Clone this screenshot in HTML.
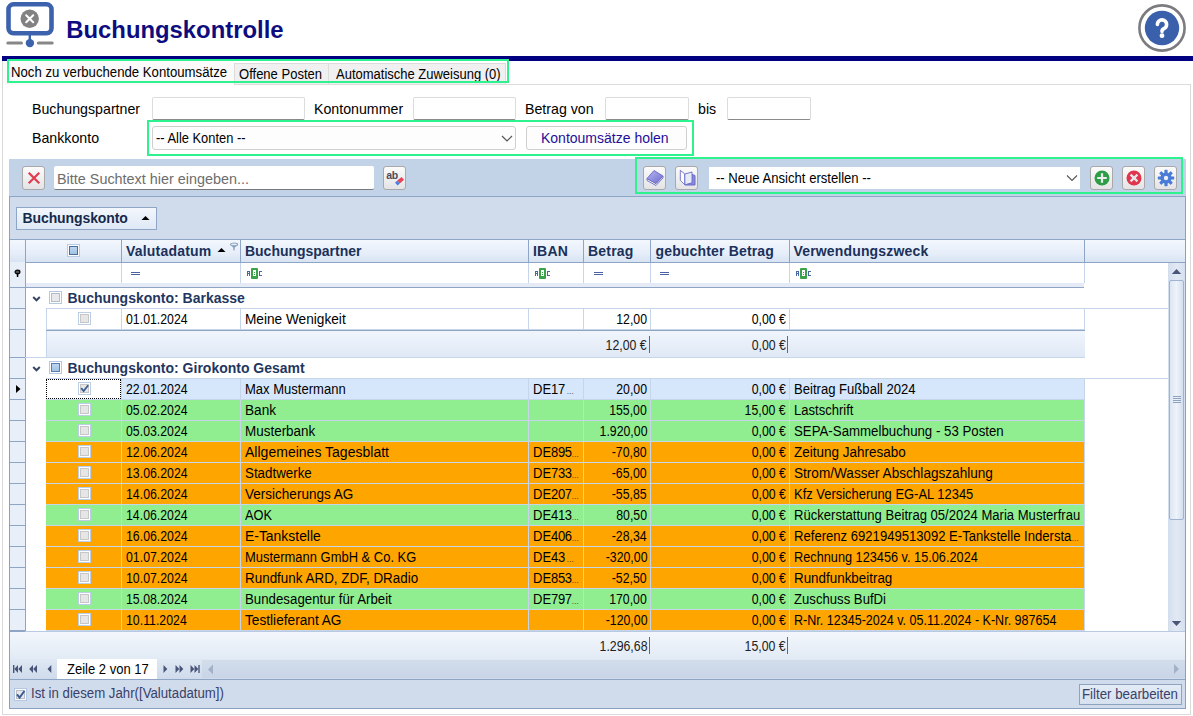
<!DOCTYPE html>
<html><head><meta charset="utf-8">
<style>
*{box-sizing:border-box;margin:0;padding:0}
html,body{width:1193px;height:716px;overflow:hidden;background:#fff;font-family:"Liberation Sans",sans-serif;color:#000}
.a{position:absolute}
.t{position:absolute;white-space:nowrap;line-height:1}
.n{letter-spacing:-0.44px}
.el{font-size:8px;letter-spacing:-0.5px}
.green{position:absolute;border:2px solid #2ef28e}
.inp{position:absolute;background:#fff;border:1px solid #dcdcdc;border-bottom:1px solid #8a8a8a;border-radius:2px}
.btn{position:absolute;border:1px solid #a9a9a9;border-radius:3px;background:linear-gradient(#fbfbfb,#e4e4e6)}
</style></head><body>

<!-- header icon -->
<svg class="a" style="left:0;top:0" width="60" height="56" viewBox="0 0 60 56">
  <rect x="8.5" y="4.3" width="43" height="29" rx="5" fill="none" stroke="#3d62ad" stroke-width="4.6"/>
  <circle cx="29.7" cy="18.8" r="9.2" fill="#828282"/>
  <path d="M26.2 15.3 L33.2 22.3 M33.2 15.3 L26.2 22.3" stroke="#fff" stroke-width="2" stroke-linecap="round"/>
  <rect x="28.6" y="35" width="2.4" height="6" fill="#3d62ad"/>
  <circle cx="29.9" cy="43.1" r="4.2" fill="#3d62ad"/>
  <line x1="7.8" y1="43.1" x2="21.5" y2="43.1" stroke="#878787" stroke-width="3" stroke-linecap="round"/>
  <line x1="38.3" y1="43.1" x2="52.2" y2="43.1" stroke="#878787" stroke-width="3" stroke-linecap="round"/>
</svg>
<div class="t" style="left:66.3px;top:18px;font-size:23.85px;font-weight:bold;color:#0d0d80">Buchungskontrolle</div>

<!-- help icon -->
<svg class="a" style="left:1136px;top:3px" width="52" height="52" viewBox="0 0 52 52">
  <circle cx="26" cy="25" r="22.6" fill="#fff" stroke="#7b7b80" stroke-width="2.6"/>
  <circle cx="26" cy="25" r="17.2" fill="#3a5fab"/>
  <path d="M21.4 21.5 A4.6 4.6 0 1 1 28.3 25.5 Q26 26.5 26 28.2 V28.4" fill="none" stroke="#fff" stroke-width="3.6" stroke-linecap="round"/>
  <circle cx="26" cy="32.7" r="2.4" fill="#fff"/>
</svg>
<!-- blue bar -->
<div class="a" style="left:2px;top:56px;width:1191px;height:5px;background:#000080"></div>

<!-- outer panel -->
<div class="a" style="left:2px;top:61px;width:1px;height:654px;background:#dadada"></div>
<div class="a" style="left:2px;top:84px;width:1189px;height:631px;border:1px solid #dadada;border-top:none;border-left:none"></div>

<!-- tabs -->
<div class="a" style="left:3px;top:61px;width:231px;height:24px;background:#fafafa"></div>
<div class="a" style="left:234px;top:63px;width:95px;height:22px;background:#f0f0f0;border:1px solid #dcdcdc;border-bottom:none"></div>
<div class="a" style="left:328px;top:63px;width:178px;height:22px;background:#f0f0f0;border:1px solid #dcdcdc;border-bottom:none"></div>
<div class="a" style="left:234px;top:84px;width:956px;height:1px;background:#dcdcdc"></div>
<div class="t" style="left:10.5px;top:64.6px;font-size:14px;transform:scaleX(0.941);transform-origin:0 0">Noch zu verbuchende Kontoumsätze</div>
<div class="t" style="left:239px;top:67.2px;font-size:14px;transform:scaleX(0.93);transform-origin:0 0">Offene Posten</div>
<div class="t" style="left:335.5px;top:67.2px;font-size:14px;transform:scaleX(0.928);transform-origin:0 0">Automatische Zuweisung (0)</div>
<div class="green" style="left:7px;top:59px;width:502px;height:24px"></div>

<!-- filter area -->
<div class="t" style="left:32px;top:102px;font-size:14.2px">Buchungspartner</div>
<div class="inp" style="left:152px;top:97px;width:153px;height:23px"></div>
<div class="t" style="left:314px;top:102px;font-size:14.2px">Kontonummer</div>
<div class="inp" style="left:413px;top:97px;width:103px;height:23px"></div>
<div class="t" style="left:525px;top:102px;font-size:14.2px">Betrag von</div>
<div class="inp" style="left:605px;top:97px;width:84px;height:23px"></div>
<div class="t" style="left:698px;top:102px;font-size:14.2px">bis</div>
<div class="inp" style="left:727px;top:97px;width:84px;height:23px"></div>

<div class="t" style="left:32px;top:131px;font-size:14.2px">Bankkonto</div>
<div class="a" style="left:152px;top:126px;width:364px;height:24px;background:#fdfdfd;border:1px solid #cfcfcf;border-radius:3px"></div>
<div class="t" style="left:156px;top:130.5px;font-size:14px;transform:scaleX(0.92);transform-origin:0 0">-- Alle Konten --</div>
<svg class="a" style="left:501px;top:133px" width="12" height="10"><path d="M1 3 L6 8 L11 3" fill="none" stroke="#555" stroke-width="1.2"/></svg>
<div class="btn" style="left:526px;top:126px;width:161px;height:24px;background:#fdfdfd;border-color:#cfcfcf"></div>
<div class="t" style="left:541px;top:131px;font-size:14px;color:#1f0f9a">Kontoumsätze holen</div>
<div class="green" style="left:147px;top:120px;width:547px;height:36px"></div>

<div class="a" style="left:9px;top:196px;width:1177px;height:513px;border:1px solid #8ba0c0;border-top:none;background:#fff"></div>
<div class="a" style="left:9px;top:159px;width:1177px;height:37px;background:#c2d3e8"></div>
<div class="a" style="left:9px;top:196px;width:1177px;height:1px;background:#8ea5c6"></div>
<div class="a" style="left:10px;top:197px;width:1175px;height:42px;background:#d0dcec"></div>
<div class="a" style="left:10px;top:239px;width:1175px;height:1px;background:#8ea5c6"></div>
<div class="btn" style="left:22px;top:166px;width:23px;height:23.5px"></div>
<svg class="a" style="left:22px;top:166px" width="23" height="23.5"><path d="M7.5 7.5 L16.5 16.5 M16.5 7.5 L7.5 16.5" stroke="#e23c4e" stroke-width="2.2" stroke-linecap="square"/></svg>
<div class="a" style="left:54px;top:166px;width:320px;height:23.5px;background:#fff;border-bottom:1px solid #7a7a7a;border-radius:2px"></div>
<div class="t" style="left:57px;top:171.5px;font-size:14.4px;color:#6d6d6d">Bitte Suchtext hier eingeben...</div>
<div class="btn" style="left:383px;top:166px;width:23px;height:23.5px"></div>
<svg class="a" style="left:383px;top:166px" width="23" height="23.5"><text x="3.2" y="12.9" font-family="Liberation Sans" font-weight="bold" font-size="10.5" fill="#4a4a58" letter-spacing="-0.3">ab</text><path d="M14.3 14.6 L18.5 11 L21 13.7 L16.8 17.5 Z" fill="#e84358"/><path d="M12 16.7 L14.3 14.6 L16.8 17.5 L14.7 19.6 Z" fill="#4b80de"/></svg>
<div class="btn" style="left:643px;top:166px;width:23px;height:23.5px"></div>
<svg class="a" style="left:643px;top:166px" width="23" height="23.5"><defs><linearGradient id="bk" x1="0" y1="0" x2="1" y2="1"><stop offset="0" stop-color="#b8b8f0"/><stop offset="1" stop-color="#6c6cd0"/></linearGradient></defs><path d="M4 12.5 L13 17.5 L20 10 L20 12 L13 19.5 L4 14.5 Z" fill="#f6f6e8" stroke="#6a6ac8" stroke-width="0.9"/><path d="M4 12.5 L11 4.5 L20 10 L13 17.5 Z" fill="url(#bk)" stroke="#6a6ac8" stroke-width="0.9"/></svg>
<div class="btn" style="left:675px;top:166px;width:23px;height:23.5px"></div>
<svg class="a" style="left:675px;top:166px" width="23" height="23.5"><path d="M10 9 L10 19 L20 19 L20 9.5 L17 8.5" fill="#8888dd" stroke="#6a6ac8" stroke-width="1"/><path d="M5.3 4.3 L9.8 8 L9.9 18.8 L5.3 14.3 Z" fill="#fff" stroke="#6a6ac8" stroke-width="0.9"/><path d="M9.8 8 L17 6 L17 16.8 L9.9 18.8 Z" fill="#e6ecf6" stroke="#6a6ac8" stroke-width="0.9"/></svg>
<div class="a" style="left:709px;top:167px;width:371px;height:22px;background:#fff"></div>
<div class="t" style="left:716px;top:170.7px;font-size:14px;transform:scaleX(0.935);transform-origin:0 0">-- Neue Ansicht erstellen --</div>
<svg class="a" style="left:1066px;top:174px" width="12" height="8"><path d="M1 1.5 L6 6.5 L11 1.5" fill="none" stroke="#555" stroke-width="1.1"/></svg>
<div class="btn" style="left:1090px;top:166px;width:23px;height:23.5px"></div>
<svg class="a" style="left:1090px;top:166px" width="23" height="23.5"><circle cx="12" cy="12" r="7.5" fill="#2e9e46"/><path d="M12 7.2 V16.8 M7.2 12 H16.8" stroke="#eeeef0" stroke-width="2.2"/></svg>
<div class="btn" style="left:1122px;top:166px;width:23px;height:23.5px"></div>
<svg class="a" style="left:1122px;top:166px" width="23" height="23.5"><circle cx="12" cy="12" r="7.5" fill="#e0354c"/><path d="M8.6 8.6 L15.4 15.4 M15.4 8.6 L8.6 15.4" stroke="#e8e8ea" stroke-width="2.2"/></svg>
<div class="btn" style="left:1154px;top:166px;width:23px;height:23.5px"></div>
<svg class="a" style="left:1154px;top:166px" width="23" height="23.5"><g transform="translate(12 12)" fill="#4a7bd6"><rect x="-1.6" y="-8.2" width="3.2" height="4" rx="0.6" transform="rotate(0)"/><rect x="-1.6" y="-8.2" width="3.2" height="4" rx="0.6" transform="rotate(45)"/><rect x="-1.6" y="-8.2" width="3.2" height="4" rx="0.6" transform="rotate(90)"/><rect x="-1.6" y="-8.2" width="3.2" height="4" rx="0.6" transform="rotate(135)"/><rect x="-1.6" y="-8.2" width="3.2" height="4" rx="0.6" transform="rotate(180)"/><rect x="-1.6" y="-8.2" width="3.2" height="4" rx="0.6" transform="rotate(225)"/><rect x="-1.6" y="-8.2" width="3.2" height="4" rx="0.6" transform="rotate(270)"/><rect x="-1.6" y="-8.2" width="3.2" height="4" rx="0.6" transform="rotate(315)"/><circle r="5.6"/><circle r="2.2" fill="#eceef2"/></g></svg>
<div class="green" style="left:635px;top:157px;width:548px;height:37px"></div>
<div class="a" style="left:16px;top:207px;width:141px;height:23px;background:linear-gradient(#f3f7fd,#dfe8f5);border:1px solid #8ea5c6"></div>
<div class="t" style="left:22.5px;top:211px;font-size:14px;font-weight:bold;color:#15294b;letter-spacing:-0.1px">Buchungskonto</div>
<svg class="a" style="left:141px;top:215px" width="9" height="6"><path d="M0.5 5 L4.5 1 L8.5 5 Z" fill="#000"/></svg>
<div class="a" style="left:10px;top:240px;width:1175px;height:22px;background:linear-gradient(#f3f7fd 0%,#e6eef9 60%,#d8e3f3 100%)"></div>
<div class="a" style="left:10px;top:262px;width:1175px;height:1px;background:#8ea5c6"></div>
<div class="a" style="left:25px;top:240px;width:1px;height:22px;background:#8ea5c6"></div>
<div class="a" style="left:121px;top:240px;width:1px;height:22px;background:#8ea5c6"></div>
<div class="a" style="left:240px;top:240px;width:1px;height:22px;background:#8ea5c6"></div>
<div class="a" style="left:528px;top:240px;width:1px;height:22px;background:#8ea5c6"></div>
<div class="a" style="left:583px;top:240px;width:1px;height:22px;background:#8ea5c6"></div>
<div class="a" style="left:650px;top:240px;width:1px;height:22px;background:#8ea5c6"></div>
<div class="a" style="left:789px;top:240px;width:1px;height:22px;background:#8ea5c6"></div>
<div class="a" style="left:1084px;top:240px;width:1px;height:22px;background:#8ea5c6"></div>
<div class="a" style="left:67px;top:244px;width:13px;height:13px;border:1px solid #b9cbe4;background:#fff"></div>
<div class="a" style="left:69px;top:246px;width:9px;height:9px;border:1px solid #4a6fa5;background:linear-gradient(#bcd6f0,#a2c2e4)"></div>
<div class="t" style="left:126px;top:244px;font-size:14px;font-weight:bold;color:#1b305a;letter-spacing:0.2px">Valutadatum</div>
<svg class="a" style="left:217px;top:247px" width="9" height="6"><path d="M0.5 5 L4.5 1 L8.5 5 Z" fill="#000"/></svg>
<svg class="a" style="left:229px;top:242px" width="10" height="10"><path d="M1.3 2.6 L4.3 5.8 V8.2 H5.7 V5.8 L8.7 2.6 Z" fill="#8aa0c0"/><ellipse cx="5" cy="2.4" rx="3.6" ry="1.4" fill="#e6edf7" stroke="#8aa0c0" stroke-width="1.1"/></svg>
<div class="t" style="left:245px;top:244px;font-size:14px;font-weight:bold;color:#1b305a;letter-spacing:-0.02px">Buchungspartner</div>
<div class="t" style="left:533px;top:244px;font-size:14px;font-weight:bold;color:#1b305a;letter-spacing:0.2px">IBAN</div>
<div class="t" style="left:588px;top:244px;font-size:14px;font-weight:bold;color:#1b305a;letter-spacing:0.2px">Betrag</div>
<div class="t" style="left:655.5px;top:244px;font-size:14px;font-weight:bold;color:#1b305a;letter-spacing:0.16px">gebuchter Betrag</div>
<div class="t" style="left:793.5px;top:244px;font-size:14px;font-weight:bold;color:#1b305a;letter-spacing:0.16px">Verwendungszweck</div>
<div class="a" style="left:10px;top:262px;width:15px;height:370px;background:#e9eff9"></div>
<div class="a" style="left:25px;top:263px;width:1059px;height:20px;background:#fff"></div>
<div class="a" style="left:121px;top:263px;width:1px;height:20px;background:#c6d5ea"></div>
<div class="a" style="left:240px;top:263px;width:1px;height:20px;background:#c6d5ea"></div>
<div class="a" style="left:528px;top:263px;width:1px;height:20px;background:#c6d5ea"></div>
<div class="a" style="left:583px;top:263px;width:1px;height:20px;background:#c6d5ea"></div>
<div class="a" style="left:650px;top:263px;width:1px;height:20px;background:#c6d5ea"></div>
<div class="a" style="left:789px;top:263px;width:1px;height:20px;background:#c6d5ea"></div>
<div class="a" style="left:1084px;top:263px;width:1px;height:20px;background:#c6d5ea"></div>
<div class="a" style="left:26px;top:283px;width:1058px;height:4px;background:#e4ebf6"></div>
<div class="a" style="left:10px;top:287px;width:1074px;height:1px;background:#8ea5c6"></div>
<svg class="a" style="left:13px;top:268px" width="9" height="10"><ellipse cx="4.5" cy="4" rx="2.4" ry="1.8" fill="#555" stroke="#000" stroke-width="1.2"/><rect x="3.8" y="5" width="1.5" height="4" fill="#000"/></svg>
<div class="a" style="left:131px;top:272px;width:9px;height:1px;background:#4a62a0"></div>
<div class="a" style="left:131px;top:274px;width:9px;height:1px;background:#4a62a0"></div>
<div class="a" style="left:247px;top:271px;width:3px;height:1px;background:#4a67a8"></div>
<div class="a" style="left:247px;top:271px;width:1px;height:5px;background:#4a67a8"></div>
<div class="a" style="left:249px;top:271px;width:1px;height:5px;background:#4a67a8"></div>
<div class="a" style="left:247px;top:273px;width:3px;height:1px;background:#4a67a8"></div>
<div class="a" style="left:251px;top:268px;width:7px;height:11px;background:#3aa34a;border-radius:1px"></div>
<div class="a" style="left:253px;top:270px;width:3px;height:6px;background:#fff"></div>
<div class="a" style="left:254px;top:272px;width:1px;height:1px;background:#3aa34a"></div>
<div class="a" style="left:254px;top:274px;width:1px;height:1px;background:#3aa34a"></div>
<div class="a" style="left:259px;top:271px;width:3px;height:1px;background:#4a67a8"></div>
<div class="a" style="left:259px;top:271px;width:1px;height:5px;background:#4a67a8"></div>
<div class="a" style="left:259px;top:275px;width:3px;height:1px;background:#4a67a8"></div>
<div class="a" style="left:535px;top:271px;width:3px;height:1px;background:#4a67a8"></div>
<div class="a" style="left:535px;top:271px;width:1px;height:5px;background:#4a67a8"></div>
<div class="a" style="left:537px;top:271px;width:1px;height:5px;background:#4a67a8"></div>
<div class="a" style="left:535px;top:273px;width:3px;height:1px;background:#4a67a8"></div>
<div class="a" style="left:539px;top:268px;width:7px;height:11px;background:#3aa34a;border-radius:1px"></div>
<div class="a" style="left:541px;top:270px;width:3px;height:6px;background:#fff"></div>
<div class="a" style="left:542px;top:272px;width:1px;height:1px;background:#3aa34a"></div>
<div class="a" style="left:542px;top:274px;width:1px;height:1px;background:#3aa34a"></div>
<div class="a" style="left:547px;top:271px;width:3px;height:1px;background:#4a67a8"></div>
<div class="a" style="left:547px;top:271px;width:1px;height:5px;background:#4a67a8"></div>
<div class="a" style="left:547px;top:275px;width:3px;height:1px;background:#4a67a8"></div>
<div class="a" style="left:594px;top:272px;width:9px;height:1px;background:#4a62a0"></div>
<div class="a" style="left:594px;top:274px;width:9px;height:1px;background:#4a62a0"></div>
<div class="a" style="left:660px;top:272px;width:9px;height:1px;background:#4a62a0"></div>
<div class="a" style="left:660px;top:274px;width:9px;height:1px;background:#4a62a0"></div>
<div class="a" style="left:796px;top:271px;width:3px;height:1px;background:#4a67a8"></div>
<div class="a" style="left:796px;top:271px;width:1px;height:5px;background:#4a67a8"></div>
<div class="a" style="left:798px;top:271px;width:1px;height:5px;background:#4a67a8"></div>
<div class="a" style="left:796px;top:273px;width:3px;height:1px;background:#4a67a8"></div>
<div class="a" style="left:800px;top:268px;width:7px;height:11px;background:#3aa34a;border-radius:1px"></div>
<div class="a" style="left:802px;top:270px;width:3px;height:6px;background:#fff"></div>
<div class="a" style="left:803px;top:272px;width:1px;height:1px;background:#3aa34a"></div>
<div class="a" style="left:803px;top:274px;width:1px;height:1px;background:#3aa34a"></div>
<div class="a" style="left:808px;top:271px;width:3px;height:1px;background:#4a67a8"></div>
<div class="a" style="left:808px;top:271px;width:1px;height:5px;background:#4a67a8"></div>
<div class="a" style="left:808px;top:275px;width:3px;height:1px;background:#4a67a8"></div>
<div class="a" style="left:1168px;top:263px;width:17px;height:369px;background:linear-gradient(90deg,#d3deed,#e2e9f4 50%,#d5e0ee)"></div>
<svg class="a" style="left:1170px;top:267px" width="13" height="9"><path d="M1.8 7 L6.5 2 L11.2 7 Z" fill="#4a5578"/></svg>
<div class="a" style="left:1169px;top:280px;width:15px;height:240px;background:linear-gradient(90deg,#dbe5f2,#eef3fa 50%,#d3dfee);border:1px solid #9fb3cf;border-radius:2px"></div>
<div class="a" style="left:1173px;top:396px;width:8px;height:1px;background:#8fa3c0"></div>
<div class="a" style="left:1173px;top:398px;width:8px;height:1px;background:#8fa3c0"></div>
<div class="a" style="left:1173px;top:400px;width:8px;height:1px;background:#8fa3c0"></div>
<div class="a" style="left:1173px;top:402px;width:8px;height:1px;background:#8fa3c0"></div>
<svg class="a" style="left:1170px;top:619px" width="13" height="9"><path d="M1.8 2 L6.5 7 L11.2 2 Z" fill="#4a5578"/></svg>
<div class="a" style="left:25px;top:262px;width:1px;height:370px;background:#8ea5c6"></div>
<div class="a" style="left:26px;top:288px;width:1142px;height:20px;background:#fff"></div>
<div class="a" style="left:46px;top:308px;width:1122px;height:1px;background:#c6d5ea"></div>
<svg class="a" style="left:32px;top:295.5px" width="9" height="7"><path d="M1.2 1 L4.5 4.3 L7.8 1" fill="none" stroke="#3a4668" stroke-width="2"/></svg>
<div class="a" style="left:49px;top:291px;width:13px;height:13px;border:1px solid #b4c8e4;background:#fff"></div>
<div class="a" style="left:51px;top:293px;width:9px;height:9px;border:1px solid #b4bcc8;background:#e8e9ec"></div>
<div class="t" style="left:67.5px;top:291px;font-size:14px;font-weight:bold;color:#1f3760;">Buchungskonto: Barkasse</div>
<div class="a" style="left:10px;top:308px;width:15px;height:1px;background:#8ea5c6"></div>
<div class="a" style="left:46px;top:309px;width:1038px;height:20px;background:#fff"></div>
<div class="a" style="left:46px;top:329px;width:1038px;height:1px;background:#c6d5ea"></div>
<div class="a" style="left:121px;top:309px;width:1px;height:20px;background:#c6d5ea"></div>
<div class="a" style="left:240px;top:309px;width:1px;height:20px;background:#c6d5ea"></div>
<div class="a" style="left:528px;top:309px;width:1px;height:20px;background:#c6d5ea"></div>
<div class="a" style="left:583px;top:309px;width:1px;height:20px;background:#c6d5ea"></div>
<div class="a" style="left:650px;top:309px;width:1px;height:20px;background:#c6d5ea"></div>
<div class="a" style="left:789px;top:309px;width:1px;height:20px;background:#c6d5ea"></div>
<div class="a" style="left:1084px;top:309px;width:1px;height:21px;background:#c6d5ea"></div>
<div class="a" style="left:78px;top:312px;width:13px;height:13px;border:1px solid #bccde6;background:#fff"></div>
<div class="a" style="left:80px;top:314px;width:9px;height:9px;border:1px solid #c7c7c7;background:#e6e6e6"></div>
<div class="t" style="left:126px;top:312px;font-size:14px;color:#000;transform:scaleX(0.88);transform-origin:0 0;">01.01.2024</div>
<div class="t" style="left:245px;top:312px;font-size:14px;color:#000;transform:scaleX(0.9753);transform-origin:0 0">Meine Wenigkeit</div>
<div class="t" style="right:546px;top:312px;font-size:14px;color:#000;transform:scaleX(0.88);transform-origin:100% 0;">12,00</div>
<div class="t" style="right:407px;top:312px;font-size:14px;color:#000;transform:scaleX(0.88);transform-origin:100% 0;">0,00 €</div>
<div class="a" style="left:46px;top:309px;width:1px;height:20px;background:#c6d5ea"></div>
<div class="a" style="left:46px;top:308px;width:1038px;height:1px;background:#c6d5ea"></div>
<div class="a" style="left:10px;top:329px;width:15px;height:1px;background:#8ea5c6"></div>
<div class="a" style="left:46px;top:330px;width:1039px;height:1px;background:#8ea5c6"></div>
<div class="a" style="left:46px;top:331px;width:1039px;height:26px;background:linear-gradient(#f0f5fc,#dfe8f5)"></div>
<div class="a" style="left:46px;top:331px;width:1px;height:26px;background:#c6d5ea"></div>
<div class="a" style="left:25px;top:357px;width:1060px;height:1px;background:#c6d5ea"></div>
<div class="t" style="right:546px;top:337.5px;font-size:14px;color:#000;transform:scaleX(0.88);transform-origin:100% 0;color:#222">12,00 €</div>
<div class="t" style="right:407px;top:337.5px;font-size:14px;color:#000;transform:scaleX(0.88);transform-origin:100% 0;color:#222">0,00 €</div>
<div class="a" style="left:649px;top:336px;width:1px;height:17px;background:#5a6a85"></div>
<div class="a" style="left:787px;top:336px;width:1px;height:17px;background:#5a6a85"></div>
<div class="a" style="left:10px;top:357px;width:15px;height:1px;background:#8ea5c6"></div>
<div class="a" style="left:26px;top:358px;width:1142px;height:20px;background:#fff"></div>
<div class="a" style="left:46px;top:378px;width:1122px;height:1px;background:#c6d5ea"></div>
<svg class="a" style="left:32px;top:365.5px" width="9" height="7"><path d="M1.2 1 L4.5 4.3 L7.8 1" fill="none" stroke="#3a4668" stroke-width="2"/></svg>
<div class="a" style="left:49px;top:361px;width:13px;height:13px;border:1px solid #b4c8e4;background:#fff"></div>
<div class="a" style="left:51px;top:363px;width:9px;height:9px;border:1px solid #5a7db0;background:linear-gradient(#bcd6f0,#a2c2e4)"></div>
<div class="t" style="left:67.5px;top:361px;font-size:14px;font-weight:bold;color:#1f3760;">Buchungskonto: Girokonto Gesamt</div>
<div class="a" style="left:10px;top:378px;width:15px;height:1px;background:#8ea5c6"></div>
<div class="a" style="left:46px;top:379px;width:1038px;height:20px;background:#d6e6fb"></div>
<div class="a" style="left:46px;top:399px;width:1038px;height:1px;background:#c6d5ea"></div>
<div class="a" style="left:121px;top:379px;width:1px;height:20px;background:#c6d5ea"></div>
<div class="a" style="left:240px;top:379px;width:1px;height:20px;background:#c6d5ea"></div>
<div class="a" style="left:528px;top:379px;width:1px;height:20px;background:#c6d5ea"></div>
<div class="a" style="left:583px;top:379px;width:1px;height:20px;background:#c6d5ea"></div>
<div class="a" style="left:650px;top:379px;width:1px;height:20px;background:#c6d5ea"></div>
<div class="a" style="left:789px;top:379px;width:1px;height:20px;background:#c6d5ea"></div>
<div class="a" style="left:1084px;top:379px;width:1px;height:21px;background:#c6d5ea"></div>
<div class="a" style="left:46px;top:379px;width:75px;height:20px;background:#fff;border:1px dotted #000"></div>
<div class="a" style="left:78px;top:382px;width:13px;height:13px;border:1px solid #bccde6;background:#fff"></div>
<div class="a" style="left:80px;top:384px;width:9px;height:9px;border:1px solid #c7c7c7;background:#e6e6e6"></div>
<svg class="a" style="left:78px;top:382px" width="13" height="13"><path d="M3.2 6.2 L5.6 9 L10.2 3.2" fill="none" stroke="#3d5c94" stroke-width="1.8"/></svg>
<div class="t" style="left:126px;top:382px;font-size:14px;color:#000;transform:scaleX(0.88);transform-origin:0 0;">22.01.2024</div>
<div class="t" style="left:245px;top:382px;font-size:14px;color:#000;transform:scaleX(0.9311);transform-origin:0 0">Max Mustermann</div>
<div class="t" style="left:533px;top:382px;font-size:14px;color:#000;transform:scaleX(0.93);transform-origin:0 0;">DE<span class="n">17</span><span class="el"> <span class="el">…</span></span></div>
<div class="t" style="right:546px;top:382px;font-size:14px;color:#000;transform:scaleX(0.88);transform-origin:100% 0;">20,00</div>
<div class="t" style="right:407px;top:382px;font-size:14px;color:#000;transform:scaleX(0.88);transform-origin:100% 0;">0,00 €</div>
<div class="t" style="left:794px;top:382px;font-size:14px;color:#000;transform:scaleX(0.9348);transform-origin:0 0">Beitrag Fußball 2024</div>
<div class="a" style="left:10px;top:399px;width:15px;height:1px;background:#8ea5c6"></div>
<div class="a" style="left:46px;top:400px;width:1038px;height:20px;background:#90ee90"></div>
<div class="a" style="left:46px;top:420px;width:1038px;height:1px;background:#c6d5ea"></div>
<div class="a" style="left:121px;top:400px;width:1px;height:20px;background:#c6d5ea"></div>
<div class="a" style="left:240px;top:400px;width:1px;height:20px;background:#c6d5ea"></div>
<div class="a" style="left:528px;top:400px;width:1px;height:20px;background:#c6d5ea"></div>
<div class="a" style="left:583px;top:400px;width:1px;height:20px;background:#c6d5ea"></div>
<div class="a" style="left:650px;top:400px;width:1px;height:20px;background:#c6d5ea"></div>
<div class="a" style="left:789px;top:400px;width:1px;height:20px;background:#c6d5ea"></div>
<div class="a" style="left:1084px;top:400px;width:1px;height:21px;background:#c6d5ea"></div>
<div class="a" style="left:78px;top:403px;width:13px;height:13px;border:1px solid #bccde6;background:#fff"></div>
<div class="a" style="left:80px;top:405px;width:9px;height:9px;border:1px solid #c7c7c7;background:#e6e6e6"></div>
<div class="t" style="left:126px;top:403px;font-size:14px;color:#000;transform:scaleX(0.88);transform-origin:0 0;">05.02.2024</div>
<div class="t" style="left:245px;top:403px;font-size:14px;color:#000;transform:scaleX(0.9743);transform-origin:0 0">Bank</div>
<div class="t" style="right:546px;top:403px;font-size:14px;color:#000;transform:scaleX(0.88);transform-origin:100% 0;">155,00</div>
<div class="t" style="right:407px;top:403px;font-size:14px;color:#000;transform:scaleX(0.88);transform-origin:100% 0;">15,00 €</div>
<div class="t" style="left:794px;top:403px;font-size:14px;color:#000;transform:scaleX(0.9309);transform-origin:0 0">Lastschrift</div>
<div class="a" style="left:10px;top:420px;width:15px;height:1px;background:#8ea5c6"></div>
<div class="a" style="left:46px;top:421px;width:1038px;height:20px;background:#90ee90"></div>
<div class="a" style="left:46px;top:441px;width:1038px;height:1px;background:#c6d5ea"></div>
<div class="a" style="left:121px;top:421px;width:1px;height:20px;background:#c6d5ea"></div>
<div class="a" style="left:240px;top:421px;width:1px;height:20px;background:#c6d5ea"></div>
<div class="a" style="left:528px;top:421px;width:1px;height:20px;background:#c6d5ea"></div>
<div class="a" style="left:583px;top:421px;width:1px;height:20px;background:#c6d5ea"></div>
<div class="a" style="left:650px;top:421px;width:1px;height:20px;background:#c6d5ea"></div>
<div class="a" style="left:789px;top:421px;width:1px;height:20px;background:#c6d5ea"></div>
<div class="a" style="left:1084px;top:421px;width:1px;height:21px;background:#c6d5ea"></div>
<div class="a" style="left:78px;top:424px;width:13px;height:13px;border:1px solid #bccde6;background:#fff"></div>
<div class="a" style="left:80px;top:426px;width:9px;height:9px;border:1px solid #c7c7c7;background:#e6e6e6"></div>
<div class="t" style="left:126px;top:424px;font-size:14px;color:#000;transform:scaleX(0.88);transform-origin:0 0;">05.03.2024</div>
<div class="t" style="left:245px;top:424px;font-size:14px;color:#000;transform:scaleX(0.9610);transform-origin:0 0">Musterbank</div>
<div class="t" style="right:546px;top:424px;font-size:14px;color:#000;transform:scaleX(0.88);transform-origin:100% 0;">1.920,00</div>
<div class="t" style="right:407px;top:424px;font-size:14px;color:#000;transform:scaleX(0.88);transform-origin:100% 0;">0,00 €</div>
<div class="t" style="left:794px;top:424px;font-size:14px;color:#000;transform:scaleX(0.9466);transform-origin:0 0">SEPA-Sammelbuchung - 53 Posten</div>
<div class="a" style="left:10px;top:441px;width:15px;height:1px;background:#8ea5c6"></div>
<div class="a" style="left:46px;top:442px;width:1038px;height:20px;background:#ffa500"></div>
<div class="a" style="left:46px;top:462px;width:1038px;height:1px;background:#c6d5ea"></div>
<div class="a" style="left:121px;top:442px;width:1px;height:20px;background:#c6d5ea"></div>
<div class="a" style="left:240px;top:442px;width:1px;height:20px;background:#c6d5ea"></div>
<div class="a" style="left:528px;top:442px;width:1px;height:20px;background:#c6d5ea"></div>
<div class="a" style="left:583px;top:442px;width:1px;height:20px;background:#c6d5ea"></div>
<div class="a" style="left:650px;top:442px;width:1px;height:20px;background:#c6d5ea"></div>
<div class="a" style="left:789px;top:442px;width:1px;height:20px;background:#c6d5ea"></div>
<div class="a" style="left:1084px;top:442px;width:1px;height:21px;background:#c6d5ea"></div>
<div class="a" style="left:78px;top:445px;width:13px;height:13px;border:1px solid #bccde6;background:#fff"></div>
<div class="a" style="left:80px;top:447px;width:9px;height:9px;border:1px solid #c7c7c7;background:#e6e6e6"></div>
<div class="t" style="left:126px;top:445px;font-size:14px;color:#000;transform:scaleX(0.88);transform-origin:0 0;">12.06.2024</div>
<div class="t" style="left:245px;top:445px;font-size:14px;color:#000;transform:scaleX(1.0020);transform-origin:0 0">Allgemeines Tagesblatt</div>
<div class="t" style="left:533px;top:445px;font-size:14px;color:#000;transform:scaleX(0.93);transform-origin:0 0;">DE<span class="n">895</span><span class="el">…</span></div>
<div class="t" style="right:546px;top:445px;font-size:14px;color:#000;transform:scaleX(0.88);transform-origin:100% 0;">-70,80</div>
<div class="t" style="right:407px;top:445px;font-size:14px;color:#000;transform:scaleX(0.88);transform-origin:100% 0;">0,00 €</div>
<div class="t" style="left:794px;top:445px;font-size:14px;color:#000;transform:scaleX(0.9632);transform-origin:0 0">Zeitung Jahresabo</div>
<div class="a" style="left:10px;top:462px;width:15px;height:1px;background:#8ea5c6"></div>
<div class="a" style="left:46px;top:463px;width:1038px;height:20px;background:#ffa500"></div>
<div class="a" style="left:46px;top:483px;width:1038px;height:1px;background:#c6d5ea"></div>
<div class="a" style="left:121px;top:463px;width:1px;height:20px;background:#c6d5ea"></div>
<div class="a" style="left:240px;top:463px;width:1px;height:20px;background:#c6d5ea"></div>
<div class="a" style="left:528px;top:463px;width:1px;height:20px;background:#c6d5ea"></div>
<div class="a" style="left:583px;top:463px;width:1px;height:20px;background:#c6d5ea"></div>
<div class="a" style="left:650px;top:463px;width:1px;height:20px;background:#c6d5ea"></div>
<div class="a" style="left:789px;top:463px;width:1px;height:20px;background:#c6d5ea"></div>
<div class="a" style="left:1084px;top:463px;width:1px;height:21px;background:#c6d5ea"></div>
<div class="a" style="left:78px;top:466px;width:13px;height:13px;border:1px solid #bccde6;background:#fff"></div>
<div class="a" style="left:80px;top:468px;width:9px;height:9px;border:1px solid #c7c7c7;background:#e6e6e6"></div>
<div class="t" style="left:126px;top:466px;font-size:14px;color:#000;transform:scaleX(0.88);transform-origin:0 0;">13.06.2024</div>
<div class="t" style="left:245px;top:466px;font-size:14px;color:#000;transform:scaleX(0.9536);transform-origin:0 0">Stadtwerke</div>
<div class="t" style="left:533px;top:466px;font-size:14px;color:#000;transform:scaleX(0.93);transform-origin:0 0;">DE<span class="n">733</span><span class="el">…</span></div>
<div class="t" style="right:546px;top:466px;font-size:14px;color:#000;transform:scaleX(0.88);transform-origin:100% 0;">-65,00</div>
<div class="t" style="right:407px;top:466px;font-size:14px;color:#000;transform:scaleX(0.88);transform-origin:100% 0;">0,00 €</div>
<div class="t" style="left:794px;top:466px;font-size:14px;color:#000;transform:scaleX(0.9706);transform-origin:0 0">Strom/Wasser Abschlagszahlung</div>
<div class="a" style="left:10px;top:483px;width:15px;height:1px;background:#8ea5c6"></div>
<div class="a" style="left:46px;top:484px;width:1038px;height:20px;background:#ffa500"></div>
<div class="a" style="left:46px;top:504px;width:1038px;height:1px;background:#c6d5ea"></div>
<div class="a" style="left:121px;top:484px;width:1px;height:20px;background:#c6d5ea"></div>
<div class="a" style="left:240px;top:484px;width:1px;height:20px;background:#c6d5ea"></div>
<div class="a" style="left:528px;top:484px;width:1px;height:20px;background:#c6d5ea"></div>
<div class="a" style="left:583px;top:484px;width:1px;height:20px;background:#c6d5ea"></div>
<div class="a" style="left:650px;top:484px;width:1px;height:20px;background:#c6d5ea"></div>
<div class="a" style="left:789px;top:484px;width:1px;height:20px;background:#c6d5ea"></div>
<div class="a" style="left:1084px;top:484px;width:1px;height:21px;background:#c6d5ea"></div>
<div class="a" style="left:78px;top:487px;width:13px;height:13px;border:1px solid #bccde6;background:#fff"></div>
<div class="a" style="left:80px;top:489px;width:9px;height:9px;border:1px solid #c7c7c7;background:#e6e6e6"></div>
<div class="t" style="left:126px;top:487px;font-size:14px;color:#000;transform:scaleX(0.88);transform-origin:0 0;">14.06.2024</div>
<div class="t" style="left:245px;top:487px;font-size:14px;color:#000;transform:scaleX(0.9664);transform-origin:0 0">Versicherungs AG</div>
<div class="t" style="left:533px;top:487px;font-size:14px;color:#000;transform:scaleX(0.93);transform-origin:0 0;">DE<span class="n">207</span><span class="el">…</span></div>
<div class="t" style="right:546px;top:487px;font-size:14px;color:#000;transform:scaleX(0.88);transform-origin:100% 0;">-55,85</div>
<div class="t" style="right:407px;top:487px;font-size:14px;color:#000;transform:scaleX(0.88);transform-origin:100% 0;">0,00 €</div>
<div class="t" style="left:794px;top:487px;font-size:14px;color:#000;transform:scaleX(0.9240);transform-origin:0 0">Kfz Versicherung EG-AL 12345</div>
<div class="a" style="left:10px;top:504px;width:15px;height:1px;background:#8ea5c6"></div>
<div class="a" style="left:46px;top:505px;width:1038px;height:20px;background:#90ee90"></div>
<div class="a" style="left:46px;top:525px;width:1038px;height:1px;background:#c6d5ea"></div>
<div class="a" style="left:121px;top:505px;width:1px;height:20px;background:#c6d5ea"></div>
<div class="a" style="left:240px;top:505px;width:1px;height:20px;background:#c6d5ea"></div>
<div class="a" style="left:528px;top:505px;width:1px;height:20px;background:#c6d5ea"></div>
<div class="a" style="left:583px;top:505px;width:1px;height:20px;background:#c6d5ea"></div>
<div class="a" style="left:650px;top:505px;width:1px;height:20px;background:#c6d5ea"></div>
<div class="a" style="left:789px;top:505px;width:1px;height:20px;background:#c6d5ea"></div>
<div class="a" style="left:1084px;top:505px;width:1px;height:21px;background:#c6d5ea"></div>
<div class="a" style="left:78px;top:508px;width:13px;height:13px;border:1px solid #bccde6;background:#fff"></div>
<div class="a" style="left:80px;top:510px;width:9px;height:9px;border:1px solid #c7c7c7;background:#e6e6e6"></div>
<div class="t" style="left:126px;top:508px;font-size:14px;color:#000;transform:scaleX(0.88);transform-origin:0 0;">14.06.2024</div>
<div class="t" style="left:245px;top:508px;font-size:14px;color:#000;transform:scaleX(0.9162);transform-origin:0 0">AOK</div>
<div class="t" style="left:533px;top:508px;font-size:14px;color:#000;transform:scaleX(0.93);transform-origin:0 0;">DE<span class="n">413</span><span class="el">…</span></div>
<div class="t" style="right:546px;top:508px;font-size:14px;color:#000;transform:scaleX(0.88);transform-origin:100% 0;">80,50</div>
<div class="t" style="right:407px;top:508px;font-size:14px;color:#000;transform:scaleX(0.88);transform-origin:100% 0;">0,00 €</div>
<div class="t" style="left:794px;top:508px;font-size:14px;color:#000;transform:scaleX(0.9334);transform-origin:0 0">Rückerstattung Beitrag 05/2024 Maria Musterfrau</div>
<div class="a" style="left:10px;top:525px;width:15px;height:1px;background:#8ea5c6"></div>
<div class="a" style="left:46px;top:526px;width:1038px;height:20px;background:#ffa500"></div>
<div class="a" style="left:46px;top:546px;width:1038px;height:1px;background:#c6d5ea"></div>
<div class="a" style="left:121px;top:526px;width:1px;height:20px;background:#c6d5ea"></div>
<div class="a" style="left:240px;top:526px;width:1px;height:20px;background:#c6d5ea"></div>
<div class="a" style="left:528px;top:526px;width:1px;height:20px;background:#c6d5ea"></div>
<div class="a" style="left:583px;top:526px;width:1px;height:20px;background:#c6d5ea"></div>
<div class="a" style="left:650px;top:526px;width:1px;height:20px;background:#c6d5ea"></div>
<div class="a" style="left:789px;top:526px;width:1px;height:20px;background:#c6d5ea"></div>
<div class="a" style="left:1084px;top:526px;width:1px;height:21px;background:#c6d5ea"></div>
<div class="a" style="left:78px;top:529px;width:13px;height:13px;border:1px solid #bccde6;background:#fff"></div>
<div class="a" style="left:80px;top:531px;width:9px;height:9px;border:1px solid #c7c7c7;background:#e6e6e6"></div>
<div class="t" style="left:126px;top:529px;font-size:14px;color:#000;transform:scaleX(0.88);transform-origin:0 0;">16.06.2024</div>
<div class="t" style="left:245px;top:529px;font-size:14px;color:#000;transform:scaleX(0.9939);transform-origin:0 0">E-Tankstelle</div>
<div class="t" style="left:533px;top:529px;font-size:14px;color:#000;transform:scaleX(0.93);transform-origin:0 0;">DE<span class="n">406</span><span class="el">…</span></div>
<div class="t" style="right:546px;top:529px;font-size:14px;color:#000;transform:scaleX(0.88);transform-origin:100% 0;">-28,34</div>
<div class="t" style="right:407px;top:529px;font-size:14px;color:#000;transform:scaleX(0.88);transform-origin:100% 0;">0,00 €</div>
<div class="t" style="left:794px;top:529px;font-size:14px;color:#000;transform:scaleX(0.9354);transform-origin:0 0">Referenz 6921949513092 E-Tankstelle Indersta<span class="el">…</span></div>
<div class="a" style="left:10px;top:546px;width:15px;height:1px;background:#8ea5c6"></div>
<div class="a" style="left:46px;top:547px;width:1038px;height:20px;background:#ffa500"></div>
<div class="a" style="left:46px;top:567px;width:1038px;height:1px;background:#c6d5ea"></div>
<div class="a" style="left:121px;top:547px;width:1px;height:20px;background:#c6d5ea"></div>
<div class="a" style="left:240px;top:547px;width:1px;height:20px;background:#c6d5ea"></div>
<div class="a" style="left:528px;top:547px;width:1px;height:20px;background:#c6d5ea"></div>
<div class="a" style="left:583px;top:547px;width:1px;height:20px;background:#c6d5ea"></div>
<div class="a" style="left:650px;top:547px;width:1px;height:20px;background:#c6d5ea"></div>
<div class="a" style="left:789px;top:547px;width:1px;height:20px;background:#c6d5ea"></div>
<div class="a" style="left:1084px;top:547px;width:1px;height:21px;background:#c6d5ea"></div>
<div class="a" style="left:78px;top:550px;width:13px;height:13px;border:1px solid #bccde6;background:#fff"></div>
<div class="a" style="left:80px;top:552px;width:9px;height:9px;border:1px solid #c7c7c7;background:#e6e6e6"></div>
<div class="t" style="left:126px;top:550px;font-size:14px;color:#000;transform:scaleX(0.88);transform-origin:0 0;">01.07.2024</div>
<div class="t" style="left:245px;top:550px;font-size:14px;color:#000;transform:scaleX(0.9251);transform-origin:0 0">Mustermann GmbH &amp; Co. KG</div>
<div class="t" style="left:533px;top:550px;font-size:14px;color:#000;transform:scaleX(0.93);transform-origin:0 0;">DE<span class="n">43</span><span class="el"> <span class="el">…</span></span></div>
<div class="t" style="right:546px;top:550px;font-size:14px;color:#000;transform:scaleX(0.88);transform-origin:100% 0;">-320,00</div>
<div class="t" style="right:407px;top:550px;font-size:14px;color:#000;transform:scaleX(0.88);transform-origin:100% 0;">0,00 €</div>
<div class="t" style="left:794px;top:550px;font-size:14px;color:#000;transform:scaleX(0.9093);transform-origin:0 0">Rechnung 123456 v. 15.06.2024</div>
<div class="a" style="left:10px;top:567px;width:15px;height:1px;background:#8ea5c6"></div>
<div class="a" style="left:46px;top:568px;width:1038px;height:20px;background:#ffa500"></div>
<div class="a" style="left:46px;top:588px;width:1038px;height:1px;background:#c6d5ea"></div>
<div class="a" style="left:121px;top:568px;width:1px;height:20px;background:#c6d5ea"></div>
<div class="a" style="left:240px;top:568px;width:1px;height:20px;background:#c6d5ea"></div>
<div class="a" style="left:528px;top:568px;width:1px;height:20px;background:#c6d5ea"></div>
<div class="a" style="left:583px;top:568px;width:1px;height:20px;background:#c6d5ea"></div>
<div class="a" style="left:650px;top:568px;width:1px;height:20px;background:#c6d5ea"></div>
<div class="a" style="left:789px;top:568px;width:1px;height:20px;background:#c6d5ea"></div>
<div class="a" style="left:1084px;top:568px;width:1px;height:21px;background:#c6d5ea"></div>
<div class="a" style="left:78px;top:571px;width:13px;height:13px;border:1px solid #bccde6;background:#fff"></div>
<div class="a" style="left:80px;top:573px;width:9px;height:9px;border:1px solid #c7c7c7;background:#e6e6e6"></div>
<div class="t" style="left:126px;top:571px;font-size:14px;color:#000;transform:scaleX(0.88);transform-origin:0 0;">10.07.2024</div>
<div class="t" style="left:245px;top:571px;font-size:14px;color:#000;transform:scaleX(0.9594);transform-origin:0 0">Rundfunk ARD, ZDF, DRadio</div>
<div class="t" style="left:533px;top:571px;font-size:14px;color:#000;transform:scaleX(0.93);transform-origin:0 0;">DE<span class="n">853</span><span class="el">…</span></div>
<div class="t" style="right:546px;top:571px;font-size:14px;color:#000;transform:scaleX(0.88);transform-origin:100% 0;">-52,50</div>
<div class="t" style="right:407px;top:571px;font-size:14px;color:#000;transform:scaleX(0.88);transform-origin:100% 0;">0,00 €</div>
<div class="t" style="left:794px;top:571px;font-size:14px;color:#000;transform:scaleX(0.9567);transform-origin:0 0">Rundfunkbeitrag</div>
<div class="a" style="left:10px;top:588px;width:15px;height:1px;background:#8ea5c6"></div>
<div class="a" style="left:46px;top:589px;width:1038px;height:20px;background:#90ee90"></div>
<div class="a" style="left:46px;top:609px;width:1038px;height:1px;background:#c6d5ea"></div>
<div class="a" style="left:121px;top:589px;width:1px;height:20px;background:#c6d5ea"></div>
<div class="a" style="left:240px;top:589px;width:1px;height:20px;background:#c6d5ea"></div>
<div class="a" style="left:528px;top:589px;width:1px;height:20px;background:#c6d5ea"></div>
<div class="a" style="left:583px;top:589px;width:1px;height:20px;background:#c6d5ea"></div>
<div class="a" style="left:650px;top:589px;width:1px;height:20px;background:#c6d5ea"></div>
<div class="a" style="left:789px;top:589px;width:1px;height:20px;background:#c6d5ea"></div>
<div class="a" style="left:1084px;top:589px;width:1px;height:21px;background:#c6d5ea"></div>
<div class="a" style="left:78px;top:592px;width:13px;height:13px;border:1px solid #bccde6;background:#fff"></div>
<div class="a" style="left:80px;top:594px;width:9px;height:9px;border:1px solid #c7c7c7;background:#e6e6e6"></div>
<div class="t" style="left:126px;top:592px;font-size:14px;color:#000;transform:scaleX(0.88);transform-origin:0 0;">15.08.2024</div>
<div class="t" style="left:245px;top:592px;font-size:14px;color:#000;transform:scaleX(0.9478);transform-origin:0 0">Bundesagentur für Arbeit</div>
<div class="t" style="left:533px;top:592px;font-size:14px;color:#000;transform:scaleX(0.93);transform-origin:0 0;">DE<span class="n">797</span><span class="el">…</span></div>
<div class="t" style="right:546px;top:592px;font-size:14px;color:#000;transform:scaleX(0.88);transform-origin:100% 0;">170,00</div>
<div class="t" style="right:407px;top:592px;font-size:14px;color:#000;transform:scaleX(0.88);transform-origin:100% 0;">0,00 €</div>
<div class="t" style="left:794px;top:592px;font-size:14px;color:#000;transform:scaleX(0.9383);transform-origin:0 0">Zuschuss BufDi</div>
<div class="a" style="left:10px;top:609px;width:15px;height:1px;background:#8ea5c6"></div>
<div class="a" style="left:46px;top:610px;width:1038px;height:20px;background:#ffa500"></div>
<div class="a" style="left:46px;top:630px;width:1038px;height:1px;background:#c6d5ea"></div>
<div class="a" style="left:121px;top:610px;width:1px;height:20px;background:#c6d5ea"></div>
<div class="a" style="left:240px;top:610px;width:1px;height:20px;background:#c6d5ea"></div>
<div class="a" style="left:528px;top:610px;width:1px;height:20px;background:#c6d5ea"></div>
<div class="a" style="left:583px;top:610px;width:1px;height:20px;background:#c6d5ea"></div>
<div class="a" style="left:650px;top:610px;width:1px;height:20px;background:#c6d5ea"></div>
<div class="a" style="left:789px;top:610px;width:1px;height:20px;background:#c6d5ea"></div>
<div class="a" style="left:1084px;top:610px;width:1px;height:21px;background:#c6d5ea"></div>
<div class="a" style="left:78px;top:613px;width:13px;height:13px;border:1px solid #bccde6;background:#fff"></div>
<div class="a" style="left:80px;top:615px;width:9px;height:9px;border:1px solid #c7c7c7;background:#e6e6e6"></div>
<div class="t" style="left:126px;top:613px;font-size:14px;color:#000;transform:scaleX(0.88);transform-origin:0 0;">10.11.2024</div>
<div class="t" style="left:245px;top:613px;font-size:14px;color:#000;transform:scaleX(0.9764);transform-origin:0 0">Testlieferant AG</div>
<div class="t" style="right:546px;top:613px;font-size:14px;color:#000;transform:scaleX(0.88);transform-origin:100% 0;">-120,00</div>
<div class="t" style="right:407px;top:613px;font-size:14px;color:#000;transform:scaleX(0.88);transform-origin:100% 0;">0,00 €</div>
<div class="t" style="left:794px;top:613px;font-size:14px;color:#000;transform:scaleX(0.8962);transform-origin:0 0">R-Nr. 12345-2024 v. 05.11.2024 - K-Nr. 987654</div>
<div class="a" style="left:10px;top:630px;width:15px;height:1px;background:#8ea5c6"></div>
<svg class="a" style="left:14px;top:384px" width="8" height="10"><path d="M2 1 L6.5 5 L2 9 Z" fill="#000"/></svg>
<div class="a" style="left:10px;top:631px;width:15px;height:1px;background:#8ea5c6"></div>
<div class="a" style="left:25px;top:631px;width:1160px;height:1px;background:#b8c9e2"></div>
<div class="a" style="left:10px;top:632px;width:1175px;height:27px;background:linear-gradient(#f3f7fc,#e2eaf5)"></div>
<div class="t" style="right:546px;top:638.5px;font-size:14px;color:#000;transform:scaleX(0.88);transform-origin:100% 0;color:#222">1.296,68</div>
<div class="t" style="right:407px;top:638.5px;font-size:14px;color:#000;transform:scaleX(0.88);transform-origin:100% 0;color:#222">15,00 €</div>
<div class="a" style="left:649px;top:637px;width:1px;height:17px;background:#5a6a85"></div>
<div class="a" style="left:787px;top:637px;width:1px;height:17px;background:#5a6a85"></div>
<div class="a" style="left:10px;top:659px;width:1175px;height:20px;background:linear-gradient(#dfe8f4,#cfdbeb)"></div>
<div class="a" style="left:10px;top:679px;width:1175px;height:1px;background:#8ea5c6"></div>
<div class="a" style="left:57px;top:659px;width:100px;height:20px;background:#fff"></div>
<div class="t" style="left:66.5px;top:662px;font-size:14px;color:#000;transform:scaleX(0.93);transform-origin:0 0">Zeile 2 von 17</div>
<div class="a" style="left:202px;top:660px;width:983px;height:18px;background:linear-gradient(#d2ddeb,#c8d5e7)"></div>
<svg class="a" style="left:8px;top:662px" width="217" height="16">
<rect x="5" y="3" width="1.4" height="8" fill="#485478"/><path d="M10 3 L6.3 7 L10 11Z M14 3 L10.3 7 L14 11Z" fill="#485478"/>
<path d="M25 3 L21.2 7 L25 11Z M29 3 L25.2 7 L29 11Z" fill="#485478"/>
<path d="M43.3 3 L39.5 7 L43.3 11Z" fill="#485478"/>
<path d="M155.5 3 L159.3 7 L155.5 11Z" fill="#485478"/>
<path d="M167.5 3 L171.3 7 L167.5 11Z M171.5 3 L175.3 7 L171.5 11Z" fill="#485478"/>
<path d="M182.5 3 L186.3 7 L182.5 11Z M186.5 3 L190.3 7 L186.5 11Z" fill="#485478"/><rect x="190.3" y="3" width="1.4" height="8" fill="#485478"/>
<path d="M205 2.5 L200 7.5 L205 12.5Z" fill="#a3b1c8"/>
</svg>
<svg class="a" style="left:1172px;top:662px" width="10" height="14"><path d="M2 2 L7 7 L2 12Z" fill="#a3b1c8"/></svg>
<div class="a" style="left:10px;top:680px;width:1175px;height:28px;background:#d0dcec"></div>
<div class="a" style="left:14px;top:688px;width:13px;height:13px;border:1px solid #b4c8e4;background:#fafafa"></div>
<div class="a" style="left:16px;top:690px;width:9px;height:9px;border:1px solid #b8bcc4;background:#e8e9ec"></div>
<svg class="a" style="left:14px;top:688px" width="13" height="13"><path d="M3 6.3 L5.6 9.6 L10.4 3" fill="none" stroke="#3d5c94" stroke-width="2"/></svg>
<div class="t" style="left:31px;top:686.1px;font-size:14px;color:#3a4068;transform:scaleX(0.944);transform-origin:0 0">Ist in diesem Jahr([Valutadatum])</div>
<div class="a" style="left:1079px;top:684px;width:103px;height:21px;border:1px solid #8fa2bf;background:linear-gradient(#e2ebf6,#d6e1ef)"></div>
<div class="t" style="left:1082px;top:687.1px;font-size:14px;color:#3a4068;transform:scaleX(0.949);transform-origin:0 0">Filter bearbeiten</div>
</body></html>
